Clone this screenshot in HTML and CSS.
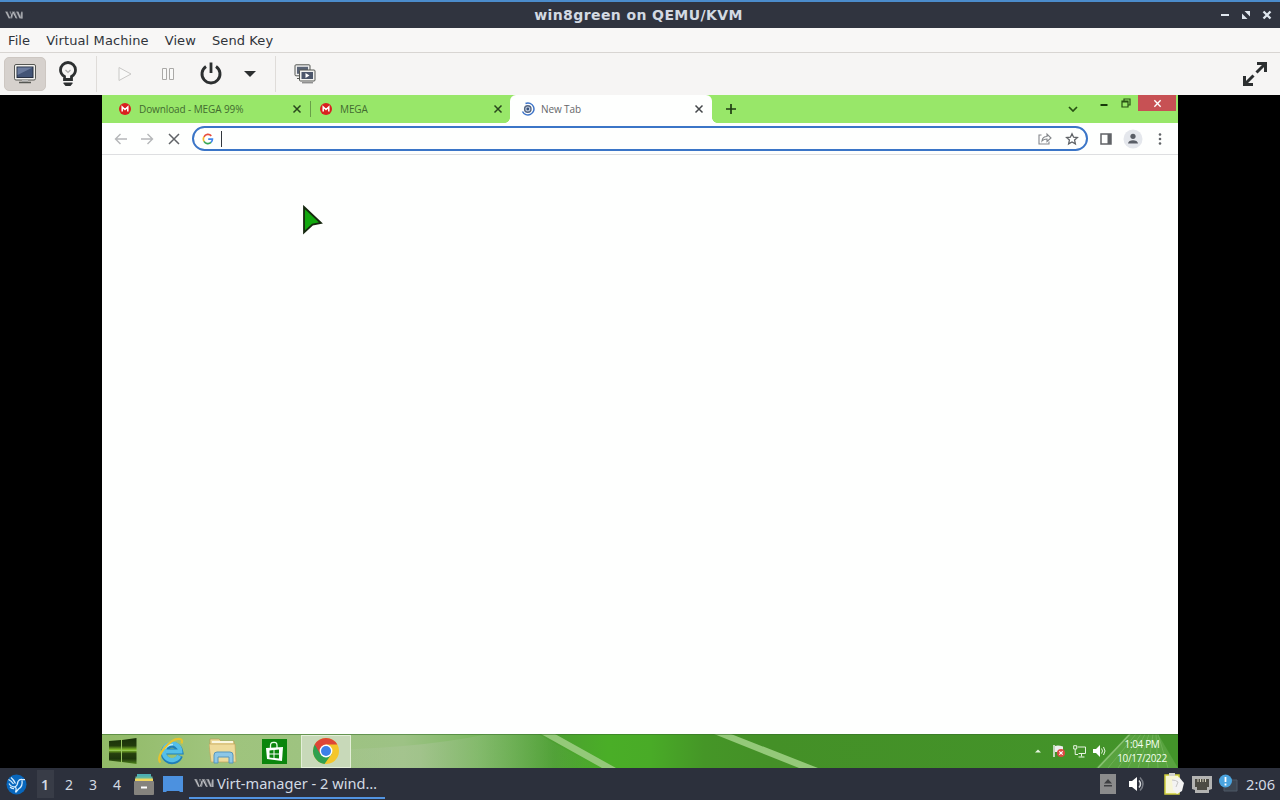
FILE: index.html
```html
<!DOCTYPE html>
<html lang="en">

<head>
    <meta charset="UTF-8">
    <meta name="viewport" content="width=device-width, initial-scale=1.0">
    <title>win8green on QEMU/KVM</title>
    <link rel="stylesheet" href="styles.css">
</head>

<body>
    <!-- shared icons -->
    <svg class="defs" width="0" height="0">
        <symbol id="vmm" viewBox="0 0 20 10">
            <path d="M0 1h3l3 8H4zM5 1h2L6 5zM6 9l2-8h3l3 8h-2L9.500 4 8 9zM12 1h3l2 5 1-5h1.500v8H16z" fill="#7d8087" />
            <path d="M1.500 1.500l3.500 7M9 1.500l3.500 7M14 1.500l3 7M6.500 8L8 3M18.800 2v7" fill="none" stroke="#c9cacd" stroke-width=".9" />
        </symbol>
        <symbol id="mega" viewBox="0 0 12 12">
            <circle cx="6" cy="6" r="6" fill="#d9201f" />
            <path d="M3.200 8.500V4L6 6.600 8.800 4v4.500" fill="none" stroke="#fff" stroke-width="1.500" />
        </symbol>
        <symbol id="cross" viewBox="0 0 10 10">
            <path d="M1.500 1.500l7 7M8.500 1.500l-7 7" fill="none" stroke="currentColor" stroke-width="1.500" />
        </symbol>
    </svg>

    <header class="titlebar">
        <svg class="titlebar-icon" width="18" height="10"><use href="#vmm" /></svg>
        <h1 class="titlebar-text">win8green on QEMU/KVM</h1>
        <div class="titlebar-buttons">
            <svg width="10" height="10" viewBox="0 0 10 10"><path d="M1 5h8" stroke="#dfe6ee" stroke-width="2" /></svg>
            <svg width="10" height="10" viewBox="0 0 10 10"><path d="M3.500 1H9v5.500zM1 3.500V9h5.500z" fill="#dfe6ee" /></svg>
            <svg width="10" height="10" viewBox="0 0 10 10"><path d="M1.500 1.500l7 7M8.500 1.500l-7 7" stroke="#dfe6ee" stroke-width="2.300" /></svg>
        </div>
    </header>

    <nav class="menubar">
        <span>File</span>
        <span>Virtual Machine</span>
        <span>View</span>
        <span>Send Key</span>
    </nav>

    <div class="toolbar">
        <div class="tool tool-active">
            <svg width="24" height="20" viewBox="0 0 24 20">
                <rect x="1.500" y=".5" width="21" height="15.500" rx="1.500" fill="#f0f0ed" stroke="#555753" />
                <rect x="4" y="3" width="16" height="10.500" fill="#425476" stroke="#252e40" />
                <path d="M4.500 3.500h15L4.500 11z" fill="#6a7b9d" />
                <path d="M9 16h6v2H9z" fill="#bbb" />
                <path d="M6 18.500h12" stroke="#555753" stroke-width="1.500" />
            </svg>
        </div>
        <div class="tool tool-bulb">
            <svg width="20" height="26" viewBox="0 0 20 26">
                <path d="M6.500 18.500v-3C4 14 2.500 12 2.500 9a7.500 7.500 0 0 1 15 0c0 3-1.500 5-4 6.500v3z" fill="none" stroke="#2c2f30" stroke-width="2.800" />
                <path d="M7.500 9l2.500 2.500L12.500 9" fill="none" stroke="#aaa" stroke-width="1.200" />
                <path d="M5.500 21.500h9v1L12.500 25h-5l-2-2.500z" fill="#2c2f30" />
            </svg>
        </div>
        <i class="tool-line"></i>
        <div class="tool tool-play">
            <svg width="16" height="16" viewBox="0 0 16 16"><path d="M2 1.500L14 8 2 14.500z" fill="#f9f9f8" stroke="#c9c8c6" /></svg>
        </div>
        <div class="tool tool-pause">
            <svg width="14" height="14" viewBox="0 0 14 14"><path d="M1.500 1.500h4v11h-4zM8.500 1.500h4v11h-4z" fill="#f9f9f8" stroke="#aaa9a7" /></svg>
        </div>
        <div class="tool tool-power">
            <svg width="22" height="24" viewBox="0 0 22 24">
                <path d="M6 4.500a9 9 0 1 0 10 0" fill="none" stroke="#2c2f30" stroke-width="2.900" />
                <path d="M11 .5V11" stroke="#2c2f30" stroke-width="2.800" />
            </svg>
        </div>
        <div class="tool tool-arrow">
            <svg width="12" height="6" viewBox="0 0 12 6"><path d="M0 0h12L6 6z" fill="#2c2f30" /></svg>
        </div>
        <i class="tool-line tool-line-second"></i>
        <div class="tool tool-snapshots">
            <svg width="22" height="20" viewBox="0 0 22 20">
                <rect x="1" y=".8" width="15" height="11" rx="1" fill="#eee" stroke="#555753" />
                <rect x="3" y="2.800" width="11" height="7" fill="#5a6476" />
                <path d="M3 14.500h4" stroke="#555753" />
                <rect x="5.500" y="6" width="15.500" height="11" rx="1" fill="#f2f2f0" stroke="#555753" />
                <rect x="7.500" y="8" width="11.500" height="7" fill="#4c566b" />
                <path d="M11.500 9v5l4-2.500z" fill="#fff" />
                <path d="M8 18.800h11" stroke="#666" />
            </svg>
        </div>
        <div class="tool tool-fullscreen">
            <svg width="26" height="26" viewBox="0 0 26 26">
                <path d="M14.500 11.500l8-8M11.500 14.500l-8 8" stroke="#2c2f30" stroke-width="3" />
                <path d="M15 1h10v10h-3V4h-7zM1 15h3v7h7v3H1z" fill="#2c2f30" />
            </svg>
        </div>
    </div>

    <main class="display">
        <div class="guest">
            <div class="tabs">
                <div class="tab">
                    <svg width="12" height="12"><use href="#mega" /></svg>
                    <span class="tab-title">Download - MEGA 99%</span>
                    <svg class="tab-close" width="10" height="10"><use href="#cross" /></svg>
                </div>
                <div class="tab tab-second">
                    <svg width="12" height="12"><use href="#mega" /></svg>
                    <span class="tab-title">MEGA</span>
                    <svg class="tab-close" width="10" height="10"><use href="#cross" /></svg>
                </div>
                <div class="tab tab-current">
                    <svg width="14" height="14" viewBox="0 0 14 14">
                        <path d="M4.500 1.500A6 6 0 1 1 1.500 9.500" fill="none" stroke="#3d74c8" stroke-width="1.500" />
                        <circle cx="6.800" cy="7" r="3.200" fill="#c6d2e4" stroke="#566783" stroke-width="1.400" />
                        <circle cx="6.800" cy="7" r="1.400" fill="#38547e" />
                    </svg>
                    <span class="tab-title">New Tab</span>
                    <svg class="tab-close" width="10" height="10"><use href="#cross" /></svg>
                </div>
                <svg class="tab-add" width="12" height="12" viewBox="0 0 12 12"><path d="M6 1v10M1 6h10" stroke="#1f3d13" stroke-width="1.700" /></svg>
                <div class="window-buttons">
                    <svg class="btn-search" width="10" height="6" viewBox="0 0 10 6"><path d="M1 1l4 4 4-4" fill="none" stroke="#275013" stroke-width="1.700" /></svg>
                    <svg class="btn-min" width="8" height="4" viewBox="0 0 8 4"><path d="M.5 2h7" stroke="#173a0a" stroke-width="2" /></svg>
                    <svg class="btn-restore" width="10" height="10" viewBox="0 0 10 10"><path d="M1 3h6v6H1zM3 3V1h6v6H7M1 4h6" fill="none" stroke="#275013" stroke-width="1.200" /></svg>
                    <div class="btn-close"><svg width="9" height="9"><use href="#cross" /></svg></div>
                </div>
            </div>

            <div class="navbar">
                <svg class="nav-back" width="14" height="12" viewBox="0 0 14 12"><path d="M13 6H2M6.500 1L1.500 6l5 5" fill="none" stroke="#b5b7b9" stroke-width="1.400" /></svg>
                <svg class="nav-forward" width="14" height="12" viewBox="0 0 14 12"><path d="M1 6h11M7.500 1l5 5-5 5" fill="none" stroke="#b5b7b9" stroke-width="1.400" /></svg>
                <svg class="nav-stop" width="12" height="12" viewBox="0 0 12 12"><path d="M1 1l10 10M11 1L1 11" stroke="#606367" stroke-width="1.500" /></svg>
                <div class="address">
                    <svg width="12" height="12" viewBox="0 0 12 12" fill="none" stroke-width="1.700">
                        <path d="M9.300 2.800A4.500 4.500 0 0 0 2 3.800" stroke="#e74c3d" />
                        <path d="M2 3.800a4.500 4.500 0 0 0 0 4.500" stroke="#f4b92d" />
                        <path d="M2 8.300a4.500 4.500 0 0 0 7 1.100" stroke="#38a653" />
                        <path d="M9 9.400A4.500 4.500 0 0 0 10.400 6.200H6.200" stroke="#4285ec" />
                    </svg>
                    <i class="caret"></i>
                    <svg class="share" width="14" height="13" viewBox="0 0 14 13" fill="none" stroke="#85888c" stroke-width="1.100">
                        <path d="M3.500 3H1v9h10V9.500" />
                        <path d="M4 9c.3-3 2-4.500 5-4.500V2l4 4-4 3.500V7C6.500 7 5.200 7.600 4 9z" />
                    </svg>
                    <svg width="14" height="14" viewBox="0 0 14 14"><path d="M7 1.700l1.600 3.500 3.800.4-2.800 2.500.8 3.800L7 10l-3.400 1.900.8-3.800-2.800-2.500 3.800-.4z" fill="none" stroke="#606367" stroke-width="1.300" /></svg>
                </div>
                <svg class="nav-panel" width="12" height="12" viewBox="0 0 12 12"><path d="M1 1h10v10H1z" fill="none" stroke="#606367" stroke-width="1.500" /><path d="M7.500 1H11v10H7.500z" fill="#606367" /></svg>
                <svg class="nav-user" width="20" height="20" viewBox="0 0 20 20"><circle cx="10" cy="10" r="9.500" fill="#e4e7ec" /><circle cx="10" cy="7.300" r="2.600" fill="#595e66" /><path d="M5 14.500c0-4.500 10-4.500 10 0z" fill="#595e66" /></svg>
                <svg class="nav-more" width="4" height="14" viewBox="0 0 4 14" fill="#606367"><circle cx="2" cy="2.500" r="1.300" /><circle cx="2" cy="7" r="1.300" /><circle cx="2" cy="11.500" r="1.300" /></svg>
            </div>

            <div class="page">
                <svg class="cursor" width="22" height="30" viewBox="0 0 22 30"><path d="M2 2l17 16-8.500 1.500L2 27.500z" fill="#12a80e" stroke="#16280f" stroke-width="1.800" /></svg>
            </div>

            <div class="win-taskbar">
                <svg class="wallpaper" width="1076" height="34" viewBox="0 0 1076 34">
                    <defs>
                        <linearGradient id="grass">
                            <stop offset="0" stop-color="#91ba67" />
                            <stop offset=".1" stop-color="#9fc47c" />
                            <stop offset=".28" stop-color="#9dc285" />
                            <stop offset=".35" stop-color="#7ab85f" />
                            <stop offset=".42" stop-color="#4c9f31" />
                            <stop offset=".47" stop-color="#4aae27" />
                            <stop offset=".51" stop-color="#49ab27" />
                            <stop offset=".56" stop-color="#459627" />
                            <stop offset=".62" stop-color="#449027" />
                            <stop offset="1" stop-color="#43942a" />
                        </linearGradient>
                        <linearGradient id="haze">
                            <stop offset="0" stop-color="#b1caa0" stop-opacity="0" />
                            <stop offset=".4" stop-color="#a9c595" stop-opacity=".6" />
                            <stop offset="1" stop-color="#60aa50" stop-opacity="0" />
                        </linearGradient>
                    </defs>
                    <path d="M0 0h1076v34H0z" fill="url(#grass)" />
                    <path d="M200 34V16Q310 16 386 0h50l60 34z" fill="url(#haze)" />
                    <path d="M439 0h14l61 34h-14zM612 0h17l87 34h-19z" fill="#94c979" />
                    <path d="M994 34l33-34h29l20 34z" fill="#78b95f" opacity=".4" />
                    <path d="M996 34l32-34" stroke="#9fd08a" stroke-width="1.500" opacity=".7" />
                    <path d="M1006 34l28-34M1016 34l23-34M1026 34l17-34M1036 34l11-34M1046 34l5-34M1056 34l-2-34M1066 34L1056 0" stroke="#a4d28e" stroke-width=".7" opacity=".4" />
                    <path d="M0 .5h1076" stroke="#356f28" opacity=".55" />
                </svg>

                <svg class="start" width="28" height="28" viewBox="0 0 28 28">
                    <defs><linearGradient id="startfill" x2="0" y2="1"><stop offset="0" stop-color="#173008" /><stop offset=".3" stop-color="#223d0c" /><stop offset=".46" stop-color="#87c52b" /><stop offset=".6" stop-color="#263f0e" /><stop offset=".8" stop-color="#1d350b" /><stop offset="1" stop-color="#4f861c" /></linearGradient></defs>
                    <path d="M0 4l12-1v22L0 23.500zM13 3l14.500-2v26L13 25z" fill="url(#startfill)" />
                    <path d="M0 13.500h28M12.500 2v24" stroke="#9bc960" stroke-width=".8" />
                </svg>
                <svg class="ie" width="28" height="28" viewBox="0 0 28 28">
                    <path d="M23 18.800A8.300 8.300 0 1 1 23.300 14.500H9" fill="none" stroke="#1f7fb8" stroke-width="5.800" />
                    <path d="M22.300 18.800A8.300 8.300 0 1 1 23.300 14.500H9" fill="none" stroke="#55bfe8" stroke-width="4.200" />
                    <path d="M8 11.500q3-4 8-4" fill="none" stroke="#b4e9fa" stroke-width="1.500" />
                    <path d="M3.500 25.500C-2.500 20 13 1 23 2c2.500 .3 2.300 2.500 1.500 4.500" fill="none" stroke="#e6c42f" stroke-width="2.200" />
                </svg>
                <svg class="explorer" width="28" height="26" viewBox="0 0 28 26">
                    <path d="M1 4V1h9l2 2h13v5H1z" fill="#edda9a" stroke="#b59f59" stroke-width=".7" />
                    <path d="M3 4h21" stroke="#faf7df" stroke-width="2" />
                    <path d="M0 6h26l1 18H2z" fill="#eedb9b" stroke="#c1a55a" stroke-width=".7" />
                    <path d="M5 25v-8q0-3 3-3h13q3 0 3 3v8h-4v-6H9v6z" fill="#8dc7e6" stroke="#5796bc" />
                </svg>
                <svg class="store" width="25" height="25" viewBox="0 0 25 25">
                    <path d="M0 0h25v25H0z" fill="#0b860d" />
                    <path d="M8.500 9V6.500Q8.500 3 12 3.500q3-.5 3 3V9" fill="none" stroke="#e8ffe8" stroke-width="1.300" />
                    <path d="M4 9l17-1-1 14-15-2z" fill="#fff" />
                    <path d="M7.500 11.500l4-.5v3.500h-4zM12.500 11l4.500-.5v4h-4.500zM7.500 15.500h4V19l-4-.5zM12.500 15.500H17v4l-4.500-.5z" fill="#0b860d" />
                </svg>
                <div class="win-app">
                    <svg width="28" height="28" viewBox="0 0 28 28">
                        <circle cx="14" cy="14" r="13" fill="#f4c62b" />
                        <path d="M14 14L2.700 7.500a13 13 0 0 0 9.800 19.400L19.600 17z" fill="#2fa04f" />
                        <path d="M2.700 7.500a13 13 0 0 1 22.600 0H14l-5.600 9.700z" fill="#de4637" />
                        <circle cx="14" cy="14" r="6.400" fill="#fff" />
                        <circle cx="14" cy="14" r="5" fill="#3c80e8" />
                    </svg>
                </div>

                <div class="win-tray">
                    <svg width="6" height="4" viewBox="0 0 6 4"><path d="M0 3.500L3 .5l3 3z" fill="#e6f4df" /></svg>
                    <svg class="tray-flag" width="12" height="12" viewBox="0 0 12 12"><path d="M1 0v12" stroke="#eee" stroke-width="1.500" /><path d="M2 1q3-1 8 .5V7H2z" fill="#eee" /><circle cx="8" cy="8" r="4" fill="#dc4b43" /><path d="M6.300 6.300l3.400 3.400M9.700 6.300L6.300 9.700" stroke="#fff" stroke-width="1.200" /></svg>
                    <svg class="tray-net" width="13" height="13" viewBox="0 0 13 13" fill="none" stroke="#e8f4e2"><path d="M4.500 2h8v6.500h-7M8.500 9v2.500M5.500 12h6M.7.700h3V4h-3zM2.200 4v5.500H5" /></svg>
                    <svg class="tray-sound" width="13" height="12" viewBox="0 0 13 12"><path d="M0 4h3l4-4v12L3 8H0z" fill="#fff" /><path d="M8.500 3.500q2 2.500 0 5M10.500 2q3 4 0 8" fill="none" stroke="#e8f4e2" /></svg>
                </div>
                <div class="win-clock">
                    <span class="win-time">1:04 PM</span>
                    <span class="win-date">10/17/2022</span>
                </div>
            </div>
        </div>
    </main>

    <footer class="panel">
        <svg class="panel-menu" width="21" height="21" viewBox="0 0 21 21">
            <circle cx="10.500" cy="10.500" r="10" fill="#0867bd" />
            <path d="M2.500 5.500q3 1.500 5 4.500M5 3.500q2.500 2 4.500 6M3 9.500q2 3.500 6 3.500 2.500-1.500 3-5.500 1.500-2.500 4-2l3 .2M16 6.500q1 6-3.500 8.500l-3 3.500M9 13q2 1 .5 5M4 13q2 2 4 1.500" fill="none" stroke="#d9efff" stroke-width="1.300" />
        </svg>
        <div class="desktops">
            <span class="desktop desktop-current">1</span>
            <span class="desktop">2</span>
            <span class="desktop">3</span>
            <span class="desktop">4</span>
        </div>
        <svg class="panel-files" width="20" height="21" viewBox="0 0 20 21">
            <path d="M3 0h14v4H3z" fill="#4daeb2" />
            <path d="M1.500 2.500h17V7h-17z" fill="#65b8a0" />
            <path d="M1 4.500h18v4H1z" fill="#f0d65e" />
            <rect y="7" width="20" height="14" rx="1" fill="#85837e" />
            <path d="M7 12.500h6v2H7z" fill="#fff" />
        </svg>
        <svg class="panel-desktop" width="20" height="16" viewBox="0 0 20 16"><path d="M0 0h20v16h-3l-1-1H4l-1 1H0z" fill="#4c91df" /></svg>
        <div class="task">
            <svg width="20" height="10"><use href="#vmm" /></svg>
            <span>Virt-manager - 2 wind…</span>
        </div>
        <div class="tray">
            <svg width="16" height="20" viewBox="0 0 16 20"><path d="M0 0h16v20H0z" fill="#8b8b8c" /><path d="M4 9.500L8 5l4 4.500zM4 11h8v1.500H4z" fill="#3e3f42" /></svg>
            <svg class="tray-volume" width="17" height="16" viewBox="0 0 17 16"><path d="M1 5h3l5-4v14l-5-4H1z" fill="#fff" /><path d="M11 4.500q3 3.500 0 7" fill="none" stroke="#dadce0" stroke-width="1.500" /><path d="M12 1.500q6 6.500 0 13" fill="none" stroke="#777b84" stroke-width="1.500" /></svg>
            <svg class="tray-clip" width="20" height="22" viewBox="0 0 20 22"><path d="M1 2h14v19H1z" fill="#f7f6d5" stroke="#cfce3b" stroke-width="1.500" /><path d="M5 0h6v3H5z" fill="#d2d2ce" /><path d="M8 7l7-3 5 6-2 8-5 3-4-4z" fill="#f3f3f3" /><path d="M8 7q4 0 6 2l-2 5" fill="none" stroke="#c6c6c4" /></svg>
            <svg class="tray-lan" width="20" height="17" viewBox="0 0 20 17"><path d="M0 0h20v13l-3 1v3H3v-3l-3-1z" fill="#b3b3b2" /><path d="M3 3h14v8h-2v3H5v-3H3z" fill="#4c4b44" /><path d="M6 3v3M8.500 3v3M11 3v3M13.500 3v3" stroke="#d5d1bd" /></svg>
            <svg class="tray-update" width="19" height="20" viewBox="0 0 19 20"><path d="M5 6h13v11H5z" fill="#3d4652" stroke="#4e5866" /><circle cx="6.500" cy="7" r="6.500" fill="#4ba4df" /><path d="M6.500 3v5M6.500 9.500v2" stroke="#fff" stroke-width="1.800" /></svg>
            <span class="clock">2:06</span>
        </div>
    </footer>
</body>

</html>
```
FILE: styles.css
```css
* {
    box-sizing: border-box;
}

body {
    display: flex;
    flex-direction: column;
    width: 1280px;
    height: 800px;
    margin: 0;
    overflow: hidden;
    background: #000;
    font-family: "DejaVu Sans", sans-serif;
}

svg {
    display: block;
    flex-shrink: 0;
}

.defs {
    position: absolute;
}

/* host window */
.titlebar {
    display: grid;
    grid-template-columns: 1fr auto 1fr;
    align-items: center;
    height: 28px;
    padding: 0 8px 0 5px;
    border-top: 2px solid #4b8ccc;
    background: #30343f;
}

.titlebar-text {
    margin: 0;
    color: #d3dae3;
    font-size: 14px;
    line-height: 26px;
    letter-spacing: 0.4px;
}

.titlebar-buttons {
    display: flex;
    justify-content: flex-end;
    gap: 11px;
}

.menubar {
    display: flex;
    gap: 16px;
    height: 25px;
    padding-left: 8px;
    border-bottom: 1px solid #d8d5d2;
    background: #f8f7f6;
    color: #30343a;
    font-size: 13px;
    line-height: 25px;
    letter-spacing: 0.1px;
}

.toolbar {
    display: flex;
    align-items: center;
    height: 42px;
    padding: 0 12px 0 4px;
    background: #f6f5f4;
}

.tool-active {
    display: flex;
    align-items: center;
    justify-content: center;
    width: 42px;
    height: 34px;
    border: 1px solid #cdc7c2;
    border-radius: 5px;
    background: #d6d1cd;
}

.tool-bulb {
    margin-left: 12px;
}

.tool-line {
    width: 1px;
    height: 36px;
    margin-left: 18px;
    background: #dfdcd9;
}

.tool-play {
    margin-left: 20px;
}

.tool-pause {
    margin-left: 28px;
}

.tool-power {
    margin-left: 25px;
}

.tool-arrow {
    margin-left: 22px;
}

.tool-line-second {
    margin-left: 19px;
}

.tool-snapshots {
    margin-left: 18px;
}

.tool-fullscreen {
    margin-left: auto;
}

/* guest screen */
.display {
    display: flex;
    justify-content: center;
    height: 673px;
    background: #000;
}

.guest {
    display: flex;
    flex-direction: column;
    width: 1076px;
    background: #fefffe;
    font-family: "Open Sans", sans-serif;
}

.tabs {
    display: flex;
    align-items: center;
    height: 28px;
    background: #98e769;
}

.tab {
    display: flex;
    align-items: center;
    width: 208px;
    height: 28px;
    padding: 0 8px 0 17px;
    color: #426b30;
    font-size: 10px;
}

.tab-title {
    margin-left: 8px;
    letter-spacing: -0.1px;
}

.tab-close {
    margin-left: auto;
    color: #29461d;
}

.tab-second {
    width: 200px;
    padding: 0 7px 0 10px;
    background: linear-gradient(#699f49, #699f49) 0 50% / 1px 16px no-repeat;
}

/* rounded feet where the open tab meets the toolbar */
.tab-current {
    width: 202px;
    padding: 0 8px 0 11px;
    border-radius: 6px 6px 0 0;
    background: #fefffe;
    box-shadow: -6px 22px 0 -22px #fefffe;
    color: #65676a;
    position: relative;
}

.tab-current::before,
.tab-current::after {
    content: "";
    position: absolute;
    bottom: 0;
    width: 5px;
    height: 5px;
}

.tab-current::before {
    left: -5px;
    background: radial-gradient(circle at 0 0, transparent 4.5px, #fefffe 5px);
}

.tab-current::after {
    right: -5px;
    background: radial-gradient(circle at 100% 0, transparent 4.5px, #fefffe 5px);
}

.tab-current .tab-title {
    margin-left: 6px;
}

.tab-current .tab-close {
    color: #45484b;
}

.tab-add {
    margin-left: 13px;
}

.window-buttons {
    display: flex;
    align-items: flex-start;
    height: 28px;
    margin-left: auto;
    padding-right: 2px;
}

.btn-search {
    margin-top: 11px;
}

.btn-min {
    margin: 8px 0 0 22px;
}

.btn-restore {
    margin: 3px 0 0 13px;
}

.btn-close {
    display: flex;
    align-items: center;
    justify-content: center;
    width: 38px;
    height: 16px;
    margin-left: 7px;
    background: #c75154;
    color: #fff;
}

.navbar {
    display: flex;
    align-items: center;
    height: 32px;
    padding: 0 16px 0 12px;
    border-bottom: 1px solid #dedfe1;
}

.nav-forward {
    margin-left: 12px;
}

.nav-stop {
    margin-left: 14px;
}

.address {
    display: flex;
    align-items: center;
    width: 896px;
    height: 25px;
    margin-left: 12px;
    padding: 0 7px 0 8px;
    border: 2px solid #3b75c7;
    border-radius: 13px;
}

.caret {
    width: 1px;
    height: 16px;
    margin-left: 7px;
    background: #32373d;
}

.share {
    margin: 0 13px 0 auto;
}

.nav-panel {
    margin-left: 12px;
}

.nav-user {
    margin-left: 11px;
}

.nav-more {
    margin-left: auto;
}

.page {
    flex: 1;
    position: relative;
}

.cursor {
    position: absolute;
    left: 200px;
    top: 50px;
}

.win-taskbar {
    position: relative;
    display: flex;
    align-items: center;
    height: 34px;
    padding-left: 7px;
}

.win-taskbar > * {
    position: relative;
}

.win-taskbar > .wallpaper {
    position: absolute;
    left: 0;
    top: 0;
}

.ie {
    margin-left: 20px;
}

.explorer {
    margin-left: 24px;
}

.store {
    margin-left: 25px;
}

.win-app {
    display: flex;
    align-items: center;
    justify-content: center;
    width: 50px;
    height: 33px;
    margin-left: 14px;
    border: 1px solid #e4efd9;
    background: #c8d9b9;
}

.win-tray {
    display: flex;
    align-items: center;
    margin-left: auto;
}

.tray-flag {
    margin-left: 12px;
}

.tray-net {
    margin-left: 8px;
}

.tray-sound {
    margin-left: 7px;
}

.win-clock {
    display: flex;
    flex-direction: column;
    width: 72px;
    color: #f5fff0;
    font-size: 10px;
    line-height: 14px;
    text-align: center;
    letter-spacing: -0.35px;
}

/* host panel */
.panel {
    display: flex;
    align-items: center;
    height: 32px;
    padding: 0 5px 0 6px;
    background: #2c303c;
    color: #d3dae3;
    font-family: "Noto Sans", sans-serif;
    font-size: 14.6px;
}

.desktops {
    display: flex;
    margin-left: 6px;
    font-size: 14px;
}

.desktop {
    width: 24px;
    height: 28px;
    line-height: 29px;
    text-align: center;
}

.desktop-current {
    background: linear-gradient(#383c47, #383c47) 4px 0 / 17px 28px no-repeat;
    font-weight: 600;
}

.panel-files {
    margin-left: 5px;
}

.panel-desktop {
    margin-left: 9px;
}

.task {
    display: flex;
    align-items: center;
    gap: 3px;
    width: 196px;
    height: 30px;
    margin-left: 6px;
    padding-left: 5px;
    border-bottom: 2px solid #5294e2;
    white-space: nowrap;
}

.tray {
    display: flex;
    align-items: center;
    margin-left: auto;
}

.tray-volume {
    margin-left: 12px;
}

.tray-clip {
    margin-left: 19px;
}

.tray-lan {
    margin-left: 8px;
}

.tray-update {
    margin-left: 7px;
}

.clock {
    margin-left: 8px;
}
```
